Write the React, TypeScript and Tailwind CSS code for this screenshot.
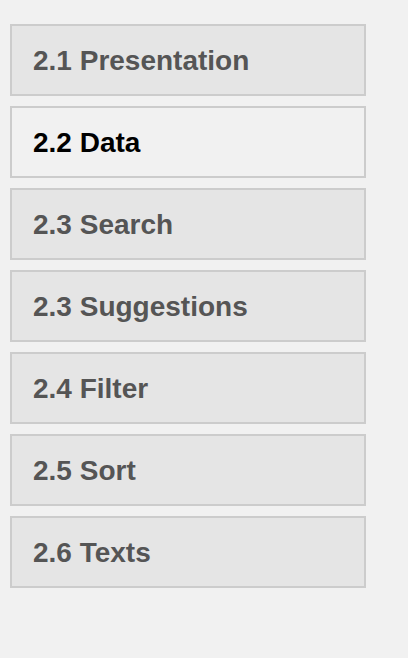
const tabs = [
  { label: "2.1 Presentation" },
  { label: "2.2 Data", active: true },
  { label: "2.3 Search" },
  { label: "2.3 Suggestions" },
  { label: "2.4 Filter" },
  { label: "2.5 Sort" },
  { label: "2.6 Texts" },
];

export default function App() {
  return (
    <div
      className="min-h-[658px] w-full bg-[#f1f1f1] pt-6 pl-[10px]"
      style={{ fontFamily: '"Liberation Sans", Arial, sans-serif' }}
    >
      <div className="flex w-[356px] flex-col gap-[10px]">
        {tabs.map((t) => (
          <button
            key={t.label}
            className={`flex h-[72px] items-center border-2 border-[#cccccc] pl-[21px] pt-[2px] text-left text-[28px] font-bold ${
              t.active ? "bg-[#f1f1f1] text-black" : "bg-[#e5e5e5] text-[#555555]"
            }`}
          >
            {t.label}
          </button>
        ))}
      </div>
    </div>
  );
}
